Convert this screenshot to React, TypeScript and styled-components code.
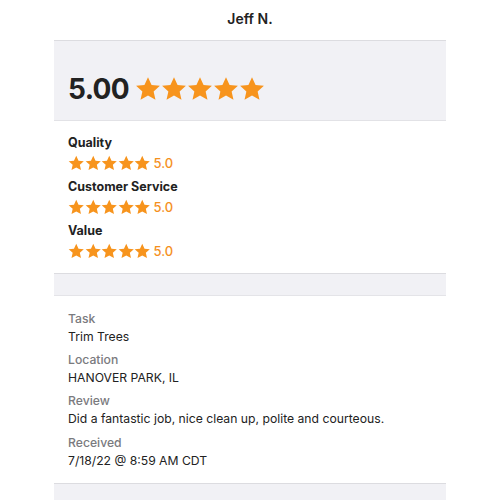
import React from "react";
import styled, { createGlobalStyle } from "styled-components";

const Global = createGlobalStyle`
  html, body { margin: 0; padding: 0; background: #fff; }
  body { font-family: "Inter", "Liberation Sans", sans-serif; color: #222; }
`;

const Page = styled.div`
  width: 500px;
  height: 500px;
  overflow: hidden;
  display: flex;
  flex-direction: column;
  align-items: center;
  & > * { flex-shrink: 0; }
`;

const Title = styled.div`
  height: 40px;
  width: 100%;
  display: flex;
  align-items: center;
  justify-content: center;
  font-size: 14px;
  font-weight: 600;
  color: #222;
  padding-bottom: 3px;
  box-sizing: border-box;
`;

const Card = styled.div`
  width: 392px;
  display: flex;
  flex-direction: column;
  & > * { flex-shrink: 0; }
`;

const Band = styled.div<{ $h: number }>`
  height: ${(p) => p.$h}px;
  background: #f1f1f5;
  border-top: 1px solid #dcdce0;
  border-bottom: 1px solid #e4e4e8;
  box-sizing: border-box;
`;

const Hero = styled.div`
  height: 81px;
  background: #f1f1f5;
  border-top: 1px solid #dcdce0;
  border-bottom: 1px solid #e2e2e6;
  box-sizing: border-box;
  display: flex;
  align-items: center;
  gap: 6px;
  padding: 16px 0 0 14px;
`;

const BigScore = styled.span`
  font-size: 28px;
  font-weight: 700;
  color: #222;
  letter-spacing: -0.6px;
`;

const Stars = styled.span<{ $gap: number }>`
  display: inline-flex;
  gap: ${(p) => p.$gap}px;
  align-items: center;
`;

const Section = styled.div<{ $pt: number; $pb: number }>`
  padding: ${(p) => p.$pt}px 14px ${(p) => p.$pb}px;
  display: flex;
  flex-direction: column;
`;

const RatingLabel = styled.div`
  font-size: 12.5px;
  font-weight: 700;
  color: #222;
  line-height: 16px;
`;

const RatingRow = styled.div`
  display: flex;
  align-items: center;
  gap: 3px;
  height: 20px;
  margin-top: 2px;
  margin-bottom: 6px;
`;

const RatingNum = styled.span`
  font-size: 13px;
  font-weight: 500;
  color: #f5901e;
`;

const FieldLabel = styled.div`
  font-size: 12.2px;
  font-weight: 500;
  color: #7a7a7e;
  line-height: 18px;
`;

const FieldValue = styled.div`
  font-size: 12.2px;
  color: #222;
  line-height: 18px;
  margin-bottom: 5.2px;
`;

const Star = ({ size }: { size: number }) => (
  <svg width={size} height={size} viewBox="0 0 24 24">
    <path
      d="M12 1.2l3.3 7.1 7.7.8-5.8 5.2 1.7 7.6L12 18l-6.9 3.9 1.7-7.6L1 9.1l7.7-.8z"
      fill="#f7941d"
    />
  </svg>
);

const StarRow = ({ size, gap }: { size: number; gap: number }) => (
  <Stars $gap={gap}>
    {[0, 1, 2, 3, 4].map((i) => (
      <Star key={i} size={size} />
    ))}
  </Stars>
);

const ratings = ["Quality", "Customer Service", "Value"];
const fields = [
  ["Task", "Trim Trees"],
  ["Location", "HANOVER PARK, IL"],
  ["Review", "Did a fantastic job, nice clean up, polite and courteous."],
  ["Received", "7/18/22 @ 8:59 AM CDT"],
];

export default function App() {
  return (
    <Page>
      <Global />
      <Title>Jeff N.</Title>
      <Card>
        <Hero>
          <BigScore>5.00</BigScore>
          <StarRow size={26} gap={0} />
        </Hero>
        <Section $pt={14} $pb={6}>
          {ratings.map((r) => (
            <React.Fragment key={r}>
              <RatingLabel>{r}</RatingLabel>
              <RatingRow>
                <StarRow size={16.5} gap={-0.5} />
                <RatingNum>5.0</RatingNum>
              </RatingRow>
            </React.Fragment>
          ))}
        </Section>
        <Band $h={23} />
        <Section $pt={14} $pb={8}>
          {fields.map(([l, v]) => (
            <React.Fragment key={l}>
              <FieldLabel>{l}</FieldLabel>
              <FieldValue>{v}</FieldValue>
            </React.Fragment>
          ))}
        </Section>
        <Band $h={40} />
      </Card>
    </Page>
  );
}
